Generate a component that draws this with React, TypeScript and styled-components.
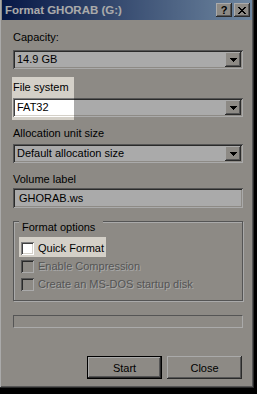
import React from 'react'
import styled, { createGlobalStyle } from 'styled-components'

const GlobalStyle = createGlobalStyle`
  html, body {
    margin: 0;
    padding: 0;
    background: #000;
  }
  body {
    width: 257px;
    height: 394px;
    overflow: hidden;
    font-family: "Liberation Sans", Arial, sans-serif;
    font-size: 11px;
    color: #000;
  }
`

const raised = 'inset -1px -1px #404040, inset 1px 1px #fff, inset -2px -2px #808080, inset 2px 2px #d4d0c8'
const sunken = 'inset 1px 1px #808080, inset -1px -1px #fff, inset 2px 2px #404040, inset -2px -2px #d4d0c8'

const Window = styled.div`
  width: 254px;
  height: 388px;
  box-sizing: border-box;
  background: #d4d0c8;
  padding: 0 2px 2px 2px;
  box-shadow: inset -1px -1px #404040, inset 1px 0 #fff, inset -2px -2px #808080;
  display: flex;
  flex-direction: column;
`

const TitleBar = styled.div`
  height: 20px;
  display: flex;
  align-items: center;
  padding: 0 2px 0 2px;
  background: linear-gradient(to right, #0a246a, #a6caf0);
`

const Title = styled.div`
  flex: 1;
  color: #fff;
  font-weight: bold;
  font-size: 11.5px;
  padding-left: 1px;
`

const TitleButtons = styled.div`
  display: flex;
  gap: 2px;
`

const TitleButton = styled.div`
  width: 16px;
  height: 14px;
  background: #d4d0c8;
  box-shadow: ${raised};
  display: flex;
  align-items: center;
  justify-content: center;
  font-weight: bold;
  font-size: 11px;
  line-height: 14px;
`

const Content = styled.div`
  display: flex;
  flex-direction: column;
  padding: 0 9px 0 11px;
`

const Label = styled.div<{ $mt: number }>`
  margin-top: ${p => p.$mt}px;
  line-height: 13px;
  height: 13px;
`

const Combo = styled.div<{ $mt: number }>`
  margin-top: ${p => p.$mt}px;
  height: 19px;
  box-sizing: border-box;
  padding: 2px;
  background: #fff;
  box-shadow: ${sunken};
  display: flex;
  align-items: center;
`

const FieldText = styled.div<{ $pad?: number }>`
  flex: 1;
  padding-left: ${p => p.$pad ?? 2}px;
  line-height: 15px;
  white-space: nowrap;
`

const DropButton = styled.div`
  width: 16px;
  height: 15px;
  background: #d4d0c8;
  box-shadow: ${raised};
  display: flex;
  align-items: center;
  justify-content: center;
`

const TextBox = styled.div<{ $mt: number }>`
  margin-top: ${p => p.$mt}px;
  height: 20px;
  box-sizing: border-box;
  padding: 2px;
  background: #fff;
  box-shadow: ${sunken};
  display: flex;
  align-items: center;
`

const Group = styled.div`
  margin-top: 13px;
  height: 80px;
  box-sizing: border-box;
  border: 1px solid #808080;
  box-shadow: inset 1px 1px #fff, 1px 1px #fff;
  display: flex;
  flex-direction: column;
`

const Legend = styled.div`
  margin: -1px 0 0 5px;
  padding: 0 8px 0 3px;
  align-self: flex-start;
  background: #d4d0c8;
  line-height: 13px;
`

const Rows = styled.div`
  margin-top: 5px;
  display: flex;
  flex-direction: column;
`

const CheckRow = styled.div<{ $disabled?: boolean }>`
  height: 18px;
  display: flex;
  align-items: center;
  padding-left: 7px;
  gap: 4px;
  color: ${p => (p.$disabled ? '#808080' : '#000')};
  text-shadow: ${p => (p.$disabled ? '1px 1px #fff' : 'none')};
`

const CheckBox = styled.div<{ $disabled?: boolean }>`
  width: 13px;
  height: 13px;
  box-sizing: border-box;
  background: ${p => (p.$disabled ? '#d4d0c8' : '#fff')};
  box-shadow: ${sunken};
`

const Progress = styled.div`
  margin-top: 14px;
  height: 13px;
  box-sizing: border-box;
  border-top: 1px solid #808080;
  border-left: 1px solid #808080;
  border-bottom: 1px solid #fff;
  border-right: 1px solid #fff;
`

const ButtonRow = styled.div`
  margin-top: 28px;
  display: flex;
  justify-content: flex-end;
  gap: 5px;
  padding-right: 1px;
`

const Button = styled.button<{ $default?: boolean }>`
  width: 75px;
  height: 23px;
  padding: 0;
  border: none;
  background: #d4d0c8;
  font: inherit;
  color: #000;
  box-shadow: ${p =>
    p.$default
      ? 'inset 0 0 0 1px #000, inset -2px -2px #404040, inset 2px 2px #fff, inset -3px -3px #808080'
      : raised};
`

// dims the whole shot except the two highlighted spots
const Dim = styled.div`
  position: fixed;
  inset: 0;
  pointer-events: none;
  background: rgba(0, 0, 0, 0.335);
  clip-path: polygon(
    evenodd,
    0 0, 257px 0, 257px 394px, 0 394px, 0 0,
    12px 77px, 74px 77px, 74px 120px, 12px 120px, 12px 77px,
    19px 237px, 106px 237px, 106px 257px, 19px 257px, 19px 237px,
    12px 77px, 0 0
  );
`

function Arrow() {
  return (
    <svg width="7" height="4" viewBox="0 0 7 4">
      <path d="M0 0h7v1h-1v1h-1v1h-1v1h-1v-1h-1v-1h-1v-1h-1z" fill="#000" />
    </svg>
  )
}

function CloseGlyph() {
  return (
    <svg width="8" height="7" viewBox="0 0 8 7">
      <path
        d="M0 0h2v1h-2zM6 0h2v1h-2zM1 1h2v1h-2zM5 1h2v1h-2zM2 2h4v1h-4zM3 3h2v1h-2zM2 4h4v1h-4zM1 5h2v1h-2zM5 5h2v1h-2zM0 6h2v1h-2zM6 6h2v1h-2z"
        fill="#000"
      />
    </svg>
  )
}

function Select({ value, mt }: { value: string; mt: number }) {
  return (
    <Combo $mt={mt}>
      <FieldText>{value}</FieldText>
      <DropButton>
        <Arrow />
      </DropButton>
    </Combo>
  )
}

const options = [
  { label: 'Quick Format', disabled: false },
  { label: 'Enable Compression', disabled: true },
  { label: 'Create an MS-DOS startup disk', disabled: true },
]

export default function App() {
  return (
    <>
      <GlobalStyle />
      <Window>
        <TitleBar>
          <Title>Format GHORAB (G:)</Title>
          <TitleButtons>
            <TitleButton>?</TitleButton>
            <TitleButton>
              <CloseGlyph />
            </TitleButton>
          </TitleButtons>
        </TitleBar>
        <Content>
          <Label $mt={11}>Capacity:</Label>
          <Select value="14.9 GB" mt={6} />
          <Label $mt={12}>File system</Label>
          <Select value="FAT32" mt={4} />
          <Label $mt={10}>Allocation unit size</Label>
          <Select value="Default allocation size" mt={4} />
          <Label $mt={10}>Volume label</Label>
          <TextBox $mt={2}>
            <FieldText $pad={4}>GHORAB.ws</FieldText>
          </TextBox>
          <Group>
            <Legend>Format options</Legend>
            <Rows>
              {options.map(o => (
                <CheckRow key={o.label} $disabled={o.disabled}>
                  <CheckBox $disabled={o.disabled} />
                  <span>{o.label}</span>
                </CheckRow>
              ))}
            </Rows>
          </Group>
          <Progress />
          <ButtonRow>
            <Button $default>Start</Button>
            <Button>Close</Button>
          </ButtonRow>
        </Content>
      </Window>
      <Dim />
    </>
  )
}
